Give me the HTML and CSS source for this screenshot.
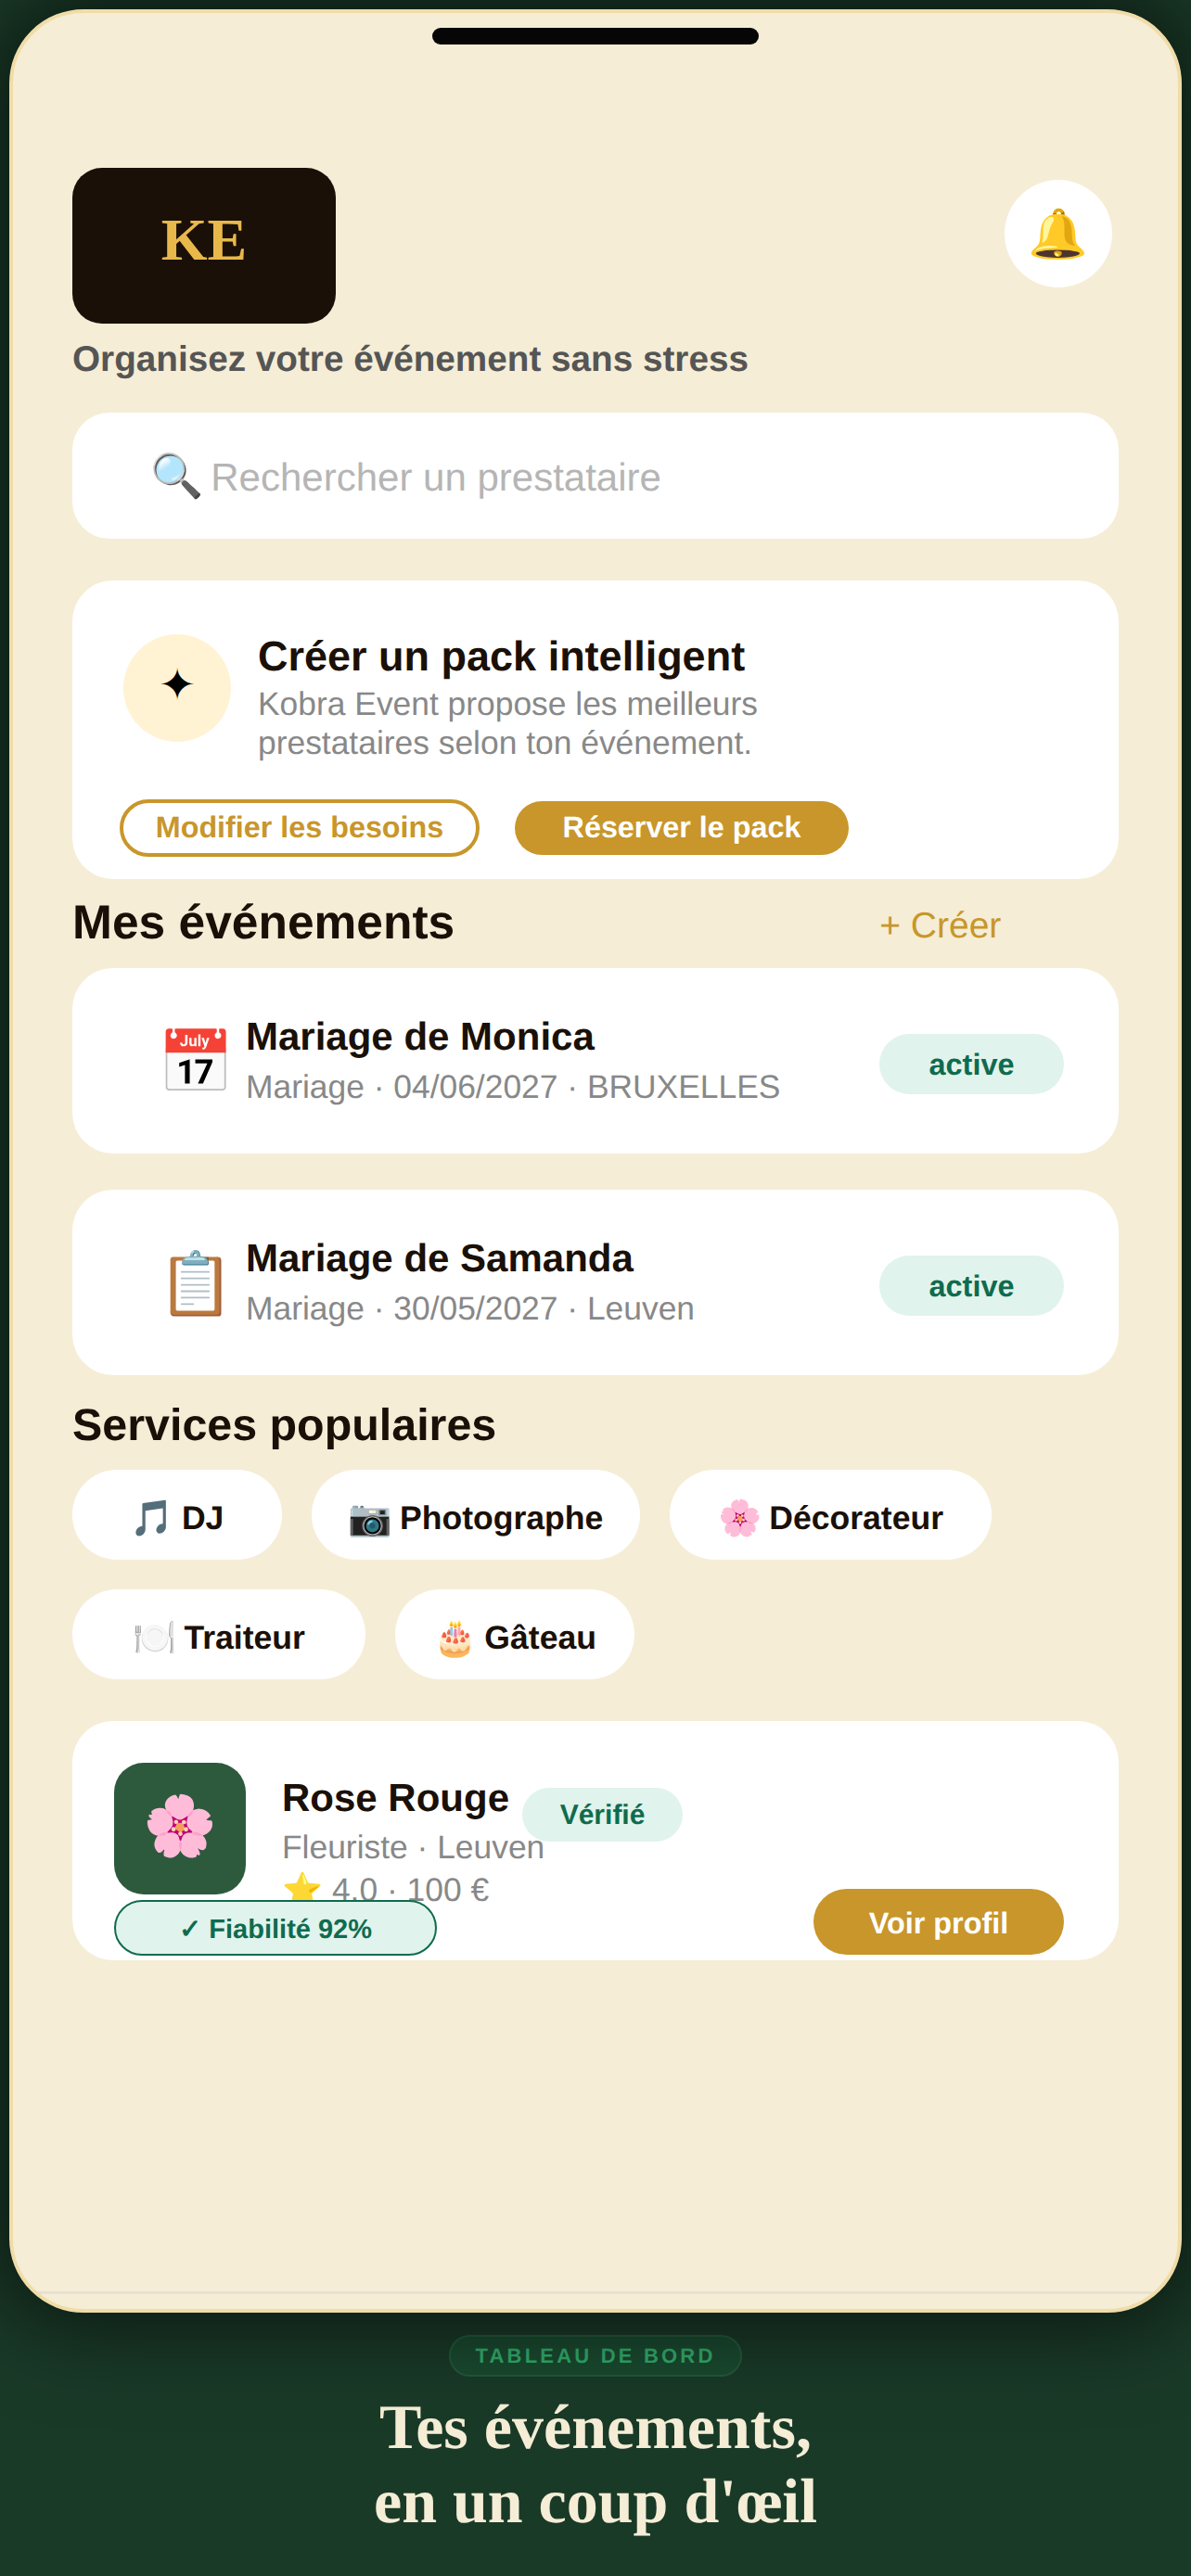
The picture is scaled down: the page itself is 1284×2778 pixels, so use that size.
FILE: index.html
```html
<!DOCTYPE html>
<html lang="fr">
<head>
  <meta charset="UTF-8" />
  <meta name="viewport" content="width=device-width, initial-scale=1.0"/>
  <title>Kobra Event</title>
  <link rel="stylesheet" href="styles.css">
</head>
<body>

  <div class="phone">
    <div class="notch"></div>

    <div class="top">
      <div class="logo">KE</div>
      <div class="bell">🔔</div>
    </div>
    <p class="tagline">Organisez votre événement sans stress</p>

    <div class="search">
      <span class="search-icon">🔍</span>
      <span class="search-text">Rechercher un prestataire</span>
    </div>

    <div class="pack">
      <div class="pack-top">
        <div class="pack-icon">✦</div>
        <div class="pack-text">
          <h3>Créer un pack intelligent</h3>
          <p>Kobra Event propose les meilleurs prestataires selon ton événement.</p>
        </div>
      </div>
      <div class="pack-actions">
        <div class="btn-outline">Modifier les besoins</div>
        <div class="btn-gold">Réserver le pack</div>
      </div>
    </div>

    <div class="section-head">
      <h2>Mes événements</h2>
      <span class="create">+ Créer</span>
    </div>

    <div class="event">
      <div class="event-icon">📅</div>
      <div class="event-info">
        <h4>Mariage de Monica</h4>
        <p>Mariage · 04/06/2027 · BRUXELLES</p>
      </div>
      <div class="status">active</div>
    </div>

    <div class="event">
      <div class="event-icon">📋</div>
      <div class="event-info">
        <h4>Mariage de Samanda</h4>
        <p>Mariage · 30/05/2027 · Leuven</p>
      </div>
      <div class="status">active</div>
    </div>

    <h2 class="services-title">Services populaires</h2>
    <div class="chips">
      <div class="chip chip-dj"><span>🎵</span> DJ</div>
      <div class="chip chip-photo"><span>📷</span> Photographe</div>
      <div class="chip chip-deco"><span>🌸</span> Décorateur</div>
      <div class="chip chip-food"><span>🍽️</span> Traiteur</div>
      <div class="chip chip-cake"><span>🎂</span> Gâteau</div>
    </div>

    <div class="provider">
      <div class="provider-top">
        <div class="avatar">🌸</div>
        <div class="provider-info">
          <div class="provider-name">
            <h4>Rose Rouge</h4>
            <span class="verified">Vérifié</span>
          </div>
          <p>Fleuriste · Leuven</p>
          <p class="rating">⭐ 4.0 · 100 €</p>
        </div>
      </div>
      <div class="provider-bottom">
        <div class="reliability">✓ Fiabilité 92%</div>
        <div class="profile-btn">Voir profil</div>
      </div>
    </div>

    <div class="nav"></div>
  </div>

  <div class="caption">
    <div class="caption-tag">TABLEAU DE BORD</div>
    <h1>Tes événements,<br>en un coup d'œil</h1>
  </div>

</body>
</html>
```

FILE: styles.css
```css
* {
  box-sizing: border-box;
  margin: 0;
  padding: 0;
}

body {
  font-family: "Liberation Sans", Arial, sans-serif;
  background: #1a3a28;
  width: 1284px;
  height: 2778px;
  padding: 10px;
  overflow: hidden;
  text-rendering: geometricPrecision;
}

.phone {
  position: relative;
  width: 1264px;
  height: 2484px;
  background: #f5edd6;
  border: 4px solid #f0dca8;
  border-radius: 80px;
  padding: 16px 64px 0;
  overflow: hidden;
  box-shadow: 0 0 90px 20px rgba(0, 0, 0, 0.55);
}

.notch {
  width: 352px;
  height: 18px;
  background: #060606;
  border-radius: 9px;
  margin: 0 auto;
}

.top {
  display: flex;
  justify-content: space-between;
  align-items: flex-start;
  margin-top: 133px;
}

.logo {
  width: 284px;
  height: 168px;
  background: #1a1008;
  border-radius: 32px;
  color: #e8b84b;
  font-family: "Liberation Serif", serif;
  font-weight: bold;
  font-size: 64px;
  text-align: center;
  line-height: 156px;
}

.bell {
  width: 116px;
  height: 116px;
  background: #fff;
  border-radius: 50%;
  margin: 13px 7px 0 0;
  font-size: 52px;
  line-height: 118px;
  text-align: center;
}

.tagline {
  font-size: 38.7px;
  font-weight: bold;
  color: #555;
  line-height: 46px;
  margin-top: 16px;
}

.search {
  display: flex;
  align-items: center;
  height: 136px;
  background: #fff;
  border-radius: 40px;
  margin-top: 34px;
  padding-left: 84px;
}

.search-icon {
  font-size: 46px;
  margin-right: 8px;
}

.search-text {
  font-size: 42px;
  color: #b5b5b5;
  margin-top: 4px;
}

.pack {
  height: 322px;
  background: #fff;
  border-radius: 44px;
  margin-top: 45px;
  padding: 58px 51px 0 55px;
}

.pack-top {
  display: flex;
  gap: 29px;
}

.pack-icon {
  flex: none;
  width: 116px;
  height: 116px;
  background: #fff3d4;
  border-radius: 50%;
  font-size: 48px;
  line-height: 112px;
  text-align: center;
  color: #000;
}

.pack-text h3 {
  font-size: 45px;
  line-height: 50px;
  color: #1a1008;
  margin-top: -1px;
}

.pack-text p {
  width: 590px;
  font-size: 35.4px;
  line-height: 42px;
  color: #888;
  margin-top: 5px;
}

.pack-actions {
  display: flex;
  align-items: center;
  gap: 38px;
  margin: 40px 0 0 -4px;
}

.btn-outline {
  width: 388px;
  height: 62px;
  border: 4px solid #c8962a;
  border-radius: 31px;
  color: #c8962a;
  font-size: 32.3px;
  font-weight: bold;
  line-height: 52px;
  text-align: center;
}

.btn-gold {
  width: 360px;
  height: 58px;
  background: #c8962a;
  border-radius: 29px;
  color: #fff;
  font-size: 32.3px;
  font-weight: bold;
  line-height: 56px;
  text-align: center;
}

.section-head {
  display: flex;
  align-items: center;
  height: 96px;
}

.section-head h2 {
  font-size: 51.5px;
  color: #1a1008;
  margin-top: -4px;
}

.create {
  font-size: 39px;
  color: #c8962a;
  margin: 6px 0 0 458px;
}

.event {
  display: flex;
  align-items: center;
  height: 200px;
  background: #fff;
  border-radius: 44px;
  margin-bottom: 39px;
  padding: 0 59px 0 92px;
}

.event-icon {
  flex: none;
  width: 95px;
  font-size: 66px;
  line-height: 66px;
  margin-top: 2px;
}

.event-info {
  flex: 1;
  margin-top: -4px;
}

.event-info h4 {
  font-size: 42px;
  line-height: 50px;
  color: #1a1008;
  margin-top: 2px;
}

.event-info p {
  font-size: 35.4px;
  line-height: 44px;
  color: #888;
  margin-top: 7px;
}

.status {
  width: 199px;
  height: 65px;
  background: #e0f3ec;
  border-radius: 33px;
  color: #0f6b4f;
  font-size: 32.4px;
  font-weight: bold;
  line-height: 66px;
  text-align: center;
  margin-top: 6px;
}

.services-title {
  font-size: 48.4px;
  line-height: 54px;
  color: #1a1008;
  margin-top: -12px;
}

.chips {
  display: flex;
  flex-wrap: wrap;
  gap: 32px;
  width: 1128px;
  margin-top: 21px;
}

.chip {
  display: flex;
  align-items: center;
  justify-content: center;
  gap: 8px;
  height: 97px;
  padding-top: 8px;
  background: #fff;
  border-radius: 48px;
  color: #1a1008;
  font-size: 35.6px;
  font-weight: bold;
}

.chip span {
  font-size: 38px;
  font-weight: normal;
}

.chip-dj {
  width: 226px;
}

.chip-photo {
  width: 354px;
}

.chip-deco {
  width: 347px;
}

.chip-food {
  width: 316px;
}

.chip-cake {
  width: 258px;
}

.provider {
  height: 258px;
  background: #fff;
  border-radius: 44px;
  margin-top: 45px;
  padding: 45px 59px 0 45px;
  overflow: hidden;
}

.provider-top {
  display: flex;
  gap: 39px;
  height: 142px;
}

.avatar {
  flex: none;
  width: 142px;
  height: 142px;
  background: #2d5a3d;
  border-radius: 32px;
  font-size: 64px;
  line-height: 137px;
  text-align: center;
}

.provider-name {
  display: flex;
  align-items: center;
  gap: 14px;
  margin-top: -3px;
}

.provider-name h4 {
  font-size: 42px;
  line-height: 50px;
  color: #1a1008;
}

.verified {
  width: 173px;
  height: 58px;
  background: #e0f3ec;
  border-radius: 29px;
  color: #0f6b4f;
  font-size: 30px;
  font-weight: bold;
  line-height: 60px;
  text-align: center;
  margin: 30px 0 -6px;
}

.provider-info p {
  font-size: 35.4px;
  line-height: 46px;
  color: #888;
}

.provider-info p:first-of-type {
  margin-top: -11px;
}

.provider-bottom {
  display: flex;
  justify-content: space-between;
  align-items: flex-end;
  position: relative;
  margin-top: -6px;
}

.reliability {
  width: 348px;
  height: 60px;
  border: 2px solid #0f6b4f;
  border-radius: 30px;
  background: #e0f3ec;
  color: #0f6b4f;
  font-size: 29px;
  font-weight: bold;
  line-height: 60px;
  text-align: center;
}

.profile-btn {
  width: 270px;
  height: 71px;
  background: #c8962a;
  border-radius: 36px;
  color: #fff;
  font-size: 32.4px;
  font-weight: bold;
  line-height: 75px;
  text-align: center;
  margin-bottom: 1px;
}

.nav {
  position: absolute;
  left: 0;
  right: 0;
  bottom: 16px;
  height: 3px;
  background: #e8e0d0;
}

.caption {
  text-align: center;
  margin-top: 24px;
}

.caption-tag {
  display: inline-block;
  width: 316px;
  height: 45px;
  background: #1a4a30;
  border: 2px solid #235a3c;
  border-radius: 23px;
  color: #33ad6c;
  font-size: 22px;
  font-weight: bold;
  letter-spacing: 3.2px;
  line-height: 41px;
}

.caption h1 {
  font-family: "Liberation Serif", serif;
  font-size: 68px;
  line-height: 80px;
  color: #f5edd6;
  margin-top: 14px;
}
```
